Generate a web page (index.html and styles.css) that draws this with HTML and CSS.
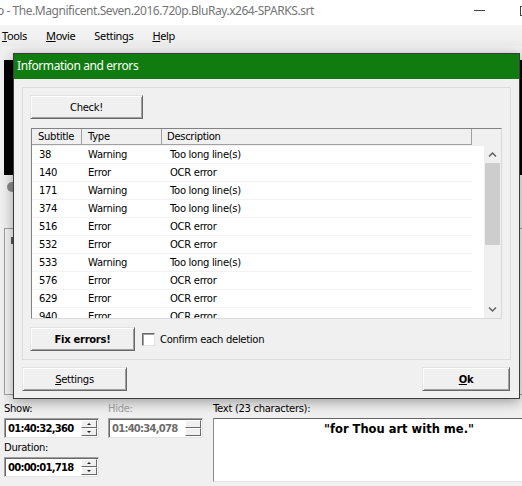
FILE: index.html
```html
<!DOCTYPE html>
<html lang="en">
<head>
  <meta charset="UTF-8">
  <title>Information and errors</title>
  <link rel="stylesheet" href="styles.css">
</head>
<body>
  <!-- Main window behind the dialog -->
  <div class="titlebar">
    <span class="title">o - The.Magnificent.Seven.2016.720p.BluRay.x264-SPARKS.srt</span>
    <span class="win-min"></span>
    <span class="win-max"></span>
  </div>
  <div class="menubar">
    <span><u>T</u>ools</span>
    <span><u>M</u>ovie</span>
    <span>Settings</span>
    <span><u>H</u>elp</span>
  </div>
  <div class="workspace">
    <div class="video"></div>
    <div class="slider"><span class="knob"></span></div>
    <div class="sublist"><span class="sublist-head"></span></div>
  </div>
  <div class="editor">
    <div class="col col-time">
      <div class="lbl">Show:</div>
      <div class="time">
        <span class="time-val">01:40:32,360</span>
        <span class="spin"><i class="up"></i><i class="down"></i></span>
      </div>
      <div class="lbl lbl-dur">Duration:</div>
      <div class="time">
        <span class="time-val">00:00:01,718</span>
        <span class="spin"><i class="up"></i><i class="down"></i></span>
      </div>
    </div>
    <div class="col col-time disabled">
      <div class="lbl">Hide:</div>
      <div class="time">
        <span class="time-val">01:40:34,078</span>
        <span class="spin"><i class="up"></i><i class="down"></i></span>
      </div>
    </div>
    <div class="col col-text">
      <div class="lbl">Text (23 characters):</div>
      <div class="textbox">"for Thou art with me."</div>
    </div>
  </div>

  <!-- Dialog window on top -->
  <div class="dialog">
    <div class="dlg-title">Information and errors</div>
    <div class="dlg-body">
      <div class="group">
        <button class="btn btn-check">Check!</button>
        <div class="listview">
          <div class="lv-head">
            <span class="hc hc-sub">Subtitle</span>
            <span class="hc hc-type">Type</span>
            <span class="hc hc-desc">Description</span>
          </div>
          <div class="lv-body">
            <div class="lv-rows">
              <div class="row"><span>38</span><span>Warning</span><span>Too long line(s)</span></div>
              <div class="row"><span>140</span><span>Error</span><span>OCR error</span></div>
              <div class="row"><span>171</span><span>Warning</span><span>Too long line(s)</span></div>
              <div class="row"><span>374</span><span>Warning</span><span>Too long line(s)</span></div>
              <div class="row"><span>516</span><span>Error</span><span>OCR error</span></div>
              <div class="row"><span>532</span><span>Error</span><span>OCR error</span></div>
              <div class="row"><span>533</span><span>Warning</span><span>Too long line(s)</span></div>
              <div class="row"><span>576</span><span>Error</span><span>OCR error</span></div>
              <div class="row"><span>629</span><span>Error</span><span>OCR error</span></div>
              <div class="row"><span>940</span><span>Error</span><span>OCR error</span></div>
            </div>
            <div class="vscroll">
              <span class="sb-btn">
                <svg width="17" height="17" viewBox="0 0 17 17"><path d="M5 10.5 L8.5 7 L12 10.5" fill="none" stroke="#606060" stroke-width="1.5"/></svg>
              </span>
              <span class="sb-thumb"></span>
              <span class="sb-track"></span>
              <span class="sb-btn">
                <svg width="17" height="17" viewBox="0 0 17 17"><path d="M5 6.5 L8.5 10 L12 6.5" fill="none" stroke="#606060" stroke-width="1.5"/></svg>
              </span>
            </div>
          </div>
        </div>
        <div class="fix-row">
          <button class="btn btn-fix">Fix errors!</button>
          <span class="checkbox"></span>
          <span class="check-label">Confirm each deletion</span>
        </div>
      </div>
      <div class="dlg-buttons">
        <button class="btn btn-settings"><u>S</u>ettings</button>
        <button class="btn btn-ok"><u>O</u>k</button>
      </div>
    </div>
  </div>
</body>
</html>
```

FILE: styles.css
```css
* {
  box-sizing: border-box;
}
body {
  margin: 0;
  width: 522px;
  height: 486px;
  overflow: hidden;
  position: relative;
  background: #f0f0f0;
  font-family: "DejaVu Sans", Verdana, sans-serif;
  font-size: 10px;
  letter-spacing: -0.3px;
  color: #000;
}

/* Main window */
.titlebar {
  height: 25px;
  padding-bottom: 4px;
  background: #fff;
  display: flex;
  align-items: center;
  white-space: nowrap;
  font-family: "Noto Sans", sans-serif;
  font-size: 12px;
  letter-spacing: -0.45px;
  color: #767676;
}
.title {
  flex: 1;
  margin-left: -3px;
  overflow: hidden;
}
.win-min {
  flex-shrink: 0;
  width: 11px;
  height: 1px;
  background: #444;
  margin-right: 35px;
}
.win-max {
  flex-shrink: 0;
  width: 10px;
  height: 10px;
  border: 1px solid #444;
  margin-right: -8px;
}
.menubar {
  height: 21px;
  display: flex;
  align-items: center;
  gap: 19px;
  padding: 0 0 1px 2px;
  font-family: "Noto Sans", sans-serif;
  font-size: 11px;
  letter-spacing: -0.35px;
  background: linear-gradient(#f5f5f5, #ececec);
}
.workspace {
  height: 353px;
  padding: 14px 0 0 4px;
}
.video {
  height: 115px;
  background: #000;
}
.slider {
  height: 53px;
  padding-top: 7px;
}
.knob {
  display: block;
  width: 10px;
  height: 10px;
  margin-left: 3px;
  border-radius: 50%;
  background: #8c8c8c;
}
.sublist {
  height: 167px;
  border: 1px solid #a0a0a0;
  border-right: none;
  background: #f4f4f4;
  padding: 8px 0 0 5px;
}
.sublist-head {
  display: block;
  width: 4px;
  height: 7px;
  margin-left: 1px;
  background: #555;
}

/* Editing area under the dialog */
.editor {
  display: flex;
  gap: 9px;
  padding: 2px 0 0 4px;
}
.col-time {
  width: 95px;
  flex-shrink: 0;
}
.col-text {
  flex-shrink: 0;
  margin-left: 1px;
}
.lbl {
  height: 17px;
  line-height: 16px;
  white-space: nowrap;
}
.lbl-dur {
  margin-top: 2px;
}
.disabled .lbl {
  color: #a0a0a0;
}
.time {
  height: 20px;
  display: flex;
  align-items: center;
  justify-content: space-between;
  padding: 0 1px 0 3px;
  background: #fff;
  border: 1px solid;
  border-color: #a0a0a0 #e3e3e3 #e3e3e3 #a0a0a0;
  box-shadow: inset 1px 1px #696969;
}
.time-val {
  font-weight: bold;
  letter-spacing: -0.75px;
}
.disabled .time-val {
  color: #6d6d6d;
}
.spin {
  display: flex;
  flex-direction: column;
  width: 16px;
}
.spin i {
  height: 8px;
  display: flex;
  align-items: center;
  justify-content: center;
  background: #f0f0f0;
  border: 1px solid;
  border-color: #fff #696969 #696969 #fff;
}
.spin i::after {
  content: "";
  border: 2px solid transparent;
}
.spin .up::after {
  border-bottom-color: #222;
  border-top-width: 0;
}
.spin .down::after {
  border-top-color: #222;
  border-bottom-width: 0;
}
.disabled .spin i::after {
  border-top-color: transparent;
  border-bottom-color: transparent;
}
.textbox {
  width: 372px;
  height: 64px;
  padding-top: 3px;
  text-align: center;
  background: #fff;
  border: 1px solid;
  border-color: #646464 #e3e3e3 #e3e3e3 #8a8a8a;
  font-size: 11.5px;
  letter-spacing: 0;
  font-weight: bold;
}

/* Dialog */
.dialog {
  position: absolute;
  left: 13px;
  top: 53px;
  width: 507px;
  height: 346px;
  border: 1px solid #3c3c3c;
  background: #f0f0f0;
  box-shadow: 0 3px 12px rgba(0, 0, 0, 0.35);
}
.dlg-title {
  height: 25px;
  line-height: 24px;
  padding-left: 3px;
  background: #107c10;
  color: #fff;
  font-family: "Noto Sans", sans-serif;
  font-size: 12px;
  letter-spacing: -0.4px;
}
.dlg-body {
  padding: 8px 8px 0 8px;
}
.group {
  height: 273px;
  border: 1px solid #dcdcdc;
  padding: 7px 7px 0 7px;
}
.btn {
  height: 24px;
  padding: 0;
  font-family: inherit;
  font-size: 10px;
  letter-spacing: -0.3px;
  color: #000;
  background: #f0f0f0;
  border: 1px solid;
  border-color: #e3e3e3 #696969 #696969 #e3e3e3;
  box-shadow: inset 1px 1px #fff, inset -1px -1px #a0a0a0;
}
.btn-check {
  width: 113px;
  display: block;
}
.listview {
  width: 471px;
  height: 191px;
  margin: 9px 0 8px 1px;
  border: 1px solid;
  border-color: #828282 #d9d9d9 #d9d9d9 #828282;
  background: #fff;
  overflow: hidden;
}
.lv-head {
  height: 17px;
  display: flex;
  background: #f0f0f0;
}
.hc {
  height: 16px;
  line-height: 16px;
  border-bottom: 1px solid #a0a0a0;
  border-right: 1px solid #a0a0a0;
}
.hc-sub {
  width: 50px;
  padding-left: 6px;
}
.hc-type {
  width: 80px;
  padding-left: 6px;
}
.hc-desc {
  width: 310px;
  padding-left: 5px;
}
.lv-body {
  height: 172px;
  display: flex;
}
.lv-rows {
  width: 440px;
  margin-right: 12px;
}
.row {
  height: 18px;
  line-height: 18px;
  display: grid;
  grid-template-columns: 50px 80px 310px;
  border-bottom: 1px solid #f2f2f2;
}
.row span:nth-child(1) {
  padding-left: 7px;
}
.row span:nth-child(2) {
  padding-left: 6px;
}
.row span:nth-child(3) {
  padding-left: 8px;
}
.vscroll {
  width: 17px;
  display: flex;
  flex-direction: column;
  background: #f0f0f0;
}
.sb-btn {
  height: 17px;
  display: block;
}
.sb-btn svg {
  display: block;
}
.sb-thumb {
  height: 82px;
  margin: 0 1px;
  background: #cdcdcd;
}
.sb-track {
  flex: 1;
}
.fix-row {
  display: flex;
  align-items: center;
}
.btn-fix {
  width: 105px;
  font-weight: bold;
}
.checkbox {
  width: 13px;
  height: 13px;
  margin-left: 7px;
  background: #fff;
  border: 1px solid;
  border-color: #696969 #e3e3e3 #e3e3e3 #696969;
  box-shadow: inset 1px 1px #a0a0a0;
}
.check-label {
  margin-left: 5px;
  white-space: nowrap;
}
.dlg-buttons {
  display: flex;
  justify-content: space-between;
  padding: 7px 1px 0 0;
}
.btn-settings {
  width: 105px;
}
.btn-ok {
  width: 88px;
  font-weight: bold;
}
```
